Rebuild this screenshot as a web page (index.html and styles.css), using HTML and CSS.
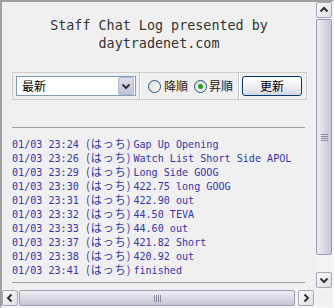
FILE: index.html
```html
<!DOCTYPE html>
<html lang="ja">
<head>
  <meta charset="UTF-8" />
  <title>Staff Chat Log</title>
  <link rel="stylesheet" href="styles.css">
</head>
<body>
  <div class="window">
    <div class="view">
      <h1 class="title">Staff Chat Log presented by<br>daytradenet.com</h1>

      <div class="toolbar">
        <div class="cell cell-select">
          <div class="select">
            <span class="select-text">最新</span>
            <span class="select-drop">
              <svg width="14" height="16" viewBox="0 0 14 16"><path d="M3.5 6.5 L7 10 L10.5 6.5" fill="none" stroke="#333" stroke-width="2"/></svg>
            </span>
          </div>
        </div>
        <div class="cell cell-order">
          <label class="radio"><span class="dot"></span>降順</label>
          <label class="radio on"><span class="dot"></span>昇順</label>
        </div>
        <div class="cell cell-button">
          <button class="refresh">更新</button>
        </div>
      </div>

      <hr class="rule">

      <div class="log">
        <div class="line">01/03 23:24 <span class="name">(はっち)</span>Gap Up Opening</div>
        <div class="line">01/03 23:26 <span class="name">(はっち)</span>Watch List Short Side APOL</div>
        <div class="line">01/03 23:29 <span class="name">(はっち)</span>Long Side GOOG</div>
        <div class="line">01/03 23:30 <span class="name">(はっち)</span>422.75 long GOOG</div>
        <div class="line">01/03 23:31 <span class="name">(はっち)</span>422.90 out</div>
        <div class="line">01/03 23:32 <span class="name">(はっち)</span>44.50 TEVA</div>
        <div class="line">01/03 23:33 <span class="name">(はっち)</span>44.60 out</div>
        <div class="line">01/03 23:37 <span class="name">(はっち)</span>421.82 Short</div>
        <div class="line">01/03 23:38 <span class="name">(はっち)</span>420.92 out</div>
        <div class="line">01/03 23:41 <span class="name">(はっち)</span>finished</div>
      </div>

      <hr class="rule rule-end">
    </div>

    <div class="vscroll">
      <div class="sbtn">
        <svg width="14" height="14" viewBox="0 0 14 14"><path d="M3.5 8.5 L7 5 L10.5 8.5" fill="none" stroke="#333" stroke-width="2"/></svg>
      </div>
      <div class="vthumb"><span class="grip-h"></span></div>
      <div class="track"></div>
      <div class="sbtn">
        <svg width="14" height="14" viewBox="0 0 14 14"><path d="M3.5 5.5 L7 9 L10.5 5.5" fill="none" stroke="#333" stroke-width="2"/></svg>
      </div>
    </div>

    <div class="hscroll">
      <div class="sbtn">
        <svg width="14" height="14" viewBox="0 0 14 14"><path d="M8.5 3.5 L5 7 L8.5 10.5" fill="none" stroke="#333" stroke-width="2"/></svg>
      </div>
      <div class="hthumb"><span class="grip-v"></span></div>
      <div class="track"></div>
      <div class="sbtn">
        <svg width="14" height="14" viewBox="0 0 14 14"><path d="M5.5 3.5 L9 7 L5.5 10.5" fill="none" stroke="#333" stroke-width="2"/></svg>
      </div>
    </div>

    <div class="corner"></div>
  </div>
</body>
</html>
```

FILE: styles.css
```css
* { box-sizing: border-box; }
body { margin: 0; background: #f0f0f0; font-family: "DejaVu Sans Mono", "Noto Sans CJK JP", monospace; }

.window { width: 334px; height: 308px; display: grid; grid-template-columns: 314px 16px; grid-template-rows: 288px 16px; border: 2px solid; border-color: #a0a0a0 #f8f8f8 #f8f8f8 #a0a0a0; background: #f0f0f0; }
.view { overflow: hidden; padding-top: 15px; }

.title { margin: 0; font-weight: normal; font-size: 13.4px; line-height: 18px; text-align: center; color: #333; white-space: nowrap; }

.toolbar { display: flex; width: 295px; height: 28px; margin: 19px 0 0 10px; border: 1px solid #cfcfcf; font-family: "Noto Sans CJK JP", sans-serif; font-size: 12px; }
.cell { display: flex; align-items: center; height: 100%; }
.cell + .cell { border-left: 1px solid #c4c4c4; box-shadow: inset 1px 0 #fff; }
.cell-select { width: 126px; padding-left: 3px; }
.cell-order { width: 99px; padding-left: 8px; }
.cell-button { flex: 1; padding-left: 3px; }

.select { display: flex; align-items: center; justify-content: space-between; width: 120px; height: 20px; border: 1px solid #7f9db9; background: #fff; padding: 1px; }
.select-text { padding-left: 4px; color: #000; line-height: 16px; }
.select-drop { display: flex; align-items: center; justify-content: center; width: 16px; height: 18px; border: 1px solid #b4b8cc; border-radius: 2px; background: linear-gradient(#dcdeec, #bfc2d6); }

.radio { display: flex; align-items: center; color: #222; line-height: 14px; }
.radio + .radio { margin-left: 6px; }
.dot { width: 13px; height: 13px; margin-right: 3px; border: 1px solid #1c5180; border-radius: 50%; background: linear-gradient(135deg, #dcdcd7, #fff); position: relative; }
.radio + .radio .dot { margin-right: 2px; }
.radio.on .dot::after { content: ""; position: absolute; left: 3px; top: 3px; width: 5px; height: 5px; border-radius: 50%; background: #21a121; }

.refresh { width: 60px; height: 20px; padding: 0; border: 1px solid #003c74; border-radius: 3px; background: linear-gradient(#ffffff, #f2f2f6 45%, #d6d6e2); font-family: "Noto Sans CJK JP", sans-serif; font-size: 12px; color: #000; line-height: 16px; }

.rule { width: 293px; margin: 27px 0 0 10px; border: 0; border-top: 1px solid #a0a0a0; height: 0; }
.rule-end { margin-top: 6px; }

.log { margin: 8px 0 0 10px; color: #3535a8; font-size: 10.1px; }
.line { height: 14px; line-height: 14px; white-space: nowrap; }
.name { padding: 0 2px 0 1px; font-family: "Noto Sans CJK JP", sans-serif; font-size: 11px; letter-spacing: 1px; line-height: 14px; }

.vscroll { display: flex; flex-direction: column; padding-bottom: 2px; background: #f3f3f6; }
.hscroll { display: flex; padding-right: 2px; background: #f3f3f6; }
.corner { background: #f0f0f0; }

.sbtn { flex: none; display: flex; align-items: center; justify-content: center; width: 16px; height: 16px; border: 1px solid #a8a8b8; border-radius: 2px; background: linear-gradient(135deg, #fbfbfd, #dcdce6); }
.track { flex: 1; }

.vthumb { flex: none; display: flex; align-items: center; justify-content: center; height: 236px; margin-top: 1px; border: 1px solid #9c9cb0; border-radius: 2px; background: linear-gradient(to right, #eeeef4, #c6c6d6); }
.hthumb { flex: none; display: flex; align-items: center; justify-content: center; width: 276px; margin-left: 1px; border: 1px solid #9c9cb0; border-radius: 2px; background: linear-gradient(#eeeef4, #c6c6d6); }
.grip-h { width: 7px; height: 7px; background: repeating-linear-gradient(#8a8aa0 0 1px, transparent 1px 2px); }
.grip-v { width: 7px; height: 7px; background: repeating-linear-gradient(to right, #8a8aa0 0 1px, transparent 1px 2px); }
```
